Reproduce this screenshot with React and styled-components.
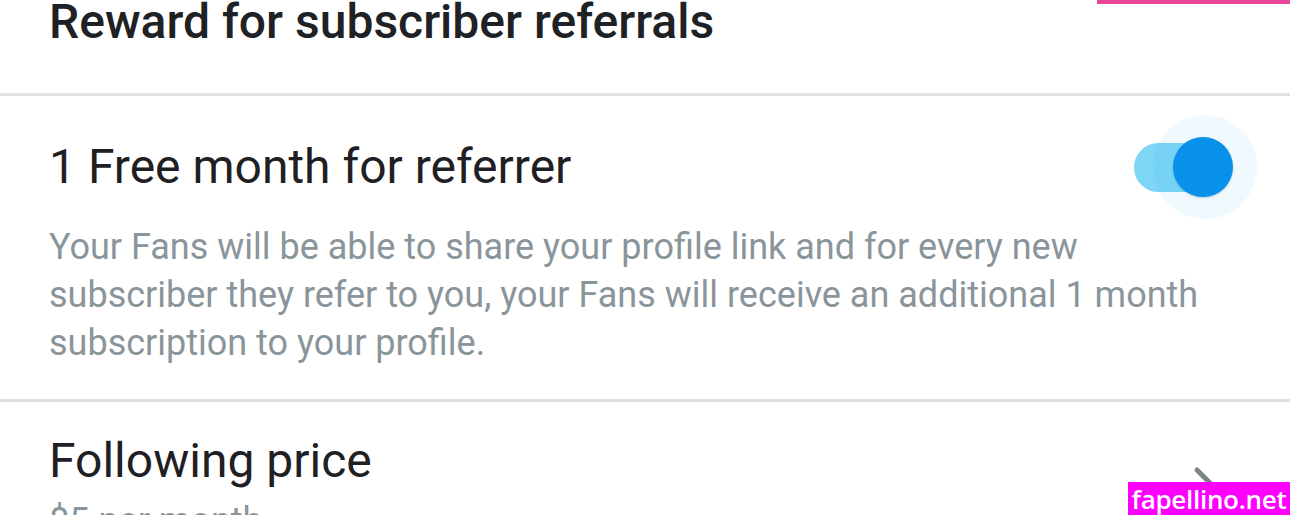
import styled, { createGlobalStyle } from "styled-components";

const GlobalStyle = createGlobalStyle`
  html, body {
    margin: 0;
    padding: 0;
    background: #ffffff;
  }
  body {
    font-family: Roboto, "Noto Sans", Arial, sans-serif;
    overflow: hidden;
  }
`;

const App = () => {
  return (
    <Page>
      <GlobalStyle />
      <TopAccent />
      <Header>
        <PageTitle>Reward for subscriber referrals</PageTitle>
      </Header>

      <Section>
        <RowHead>
          <ItemTitle>1 Free month for referrer</ItemTitle>
          <Toggle on aria-label="1 Free month for referrer">
            <Knob />
          </Toggle>
        </RowHead>
        <Description>
          Your Fans will be able to share your profile link and for every new
          subscriber they refer to you, your Fans will receive an additional 1
          month subscription to your profile.
        </Description>
      </Section>

      <LinkRow>
        <div>
          <ItemTitle>Following price</ItemTitle>
          <SubText>$5 per month</SubText>
        </div>
        <Chevron viewBox="0 0 24 24" aria-hidden="true">
          <path d="M8.5 4.5 L16 12 L8.5 19.5" />
        </Chevron>
      </LinkRow>

      <Watermark>fapellino.net</Watermark>
    </Page>
  );
};

// Styles

const Page = styled.div`
  position: relative;
  width: 1290px;
  height: 515px;
  overflow: hidden;
  background: #ffffff;
`;

const TopAccent = styled.div`
  position: absolute;
  top: 0;
  right: 0;
  width: 193px;
  height: 4px;
  background: #e8479a;
`;

const Header = styled.header`
  padding: 1px 49px 51px 49px;
  border-bottom: 3px solid #dde1e1;
`;

const PageTitle = styled.h1`
  margin: 0;
  font-size: 48px;
  line-height: 41px;
  font-weight: 500;
  color: #202124;
`;

const Section = styled.section`
  padding: 44px 49px 32px 49px;
  border-bottom: 3px solid #dde1e1;
`;

const RowHead = styled.div`
  display: flex;
  align-items: center;
  justify-content: space-between;
  padding-right: 11px;
`;

const ItemTitle = styled.h2`
  margin: 0;
  font-size: 48px;
  line-height: 54px;
  font-weight: 400;
  color: #1f2023;
`;

const Toggle = styled.button`
  position: relative;
  width: 96px;
  height: 49px;
  border: 0;
  padding: 0;
  border-radius: 25px;
  background: ${(p) => (p.on ? "#7ed6f6" : "#cfd4d6")};
  cursor: pointer;

  &::before {
    content: "";
    position: absolute;
    left: 19px;
    top: -28px;
    width: 104px;
    height: 104px;
    border-radius: 50%;
    background: rgba(0, 175, 240, 0.06);
  }
`;

const Knob = styled.span`
  position: absolute;
  right: -3px;
  top: -6px;
  width: 60px;
  height: 60px;
  border-radius: 50%;
  background: #0891e9;
  box-shadow: 0 1px 2px rgba(0, 60, 110, 0.25);
`;

const Description = styled.p`
  margin: 29px 0 0 0;
  max-width: 1160px;
  font-size: 36px;
  line-height: 48px;
  color: #8a959b;
`;

const LinkRow = styled.div`
  display: flex;
  align-items: flex-start;
  justify-content: space-between;
  padding: 32px 62px 0 49px;
`;

const SubText = styled.div`
  margin-top: 9px;
  font-size: 36px;
  line-height: 48px;
  color: #8a959b;
`;

const Chevron = styled.svg`
  width: 48px;
  height: 48px;
  margin-top: 27px;
  fill: none;
  stroke: #7d8589;
  stroke-width: 2.5;
  stroke-linecap: round;
  stroke-linejoin: round;
`;

const Watermark = styled.div`
  position: absolute;
  right: 0;
  bottom: 0;
  width: 162px;
  height: 33px;
  display: flex;
  align-items: center;
  justify-content: center;
  background: #ff00ff;
  color: #ffffff;
  font-family: "Open Sans", Roboto, sans-serif;
  font-weight: 600;
  font-size: 26px;
  letter-spacing: -0.3px;
`;

export default App;
